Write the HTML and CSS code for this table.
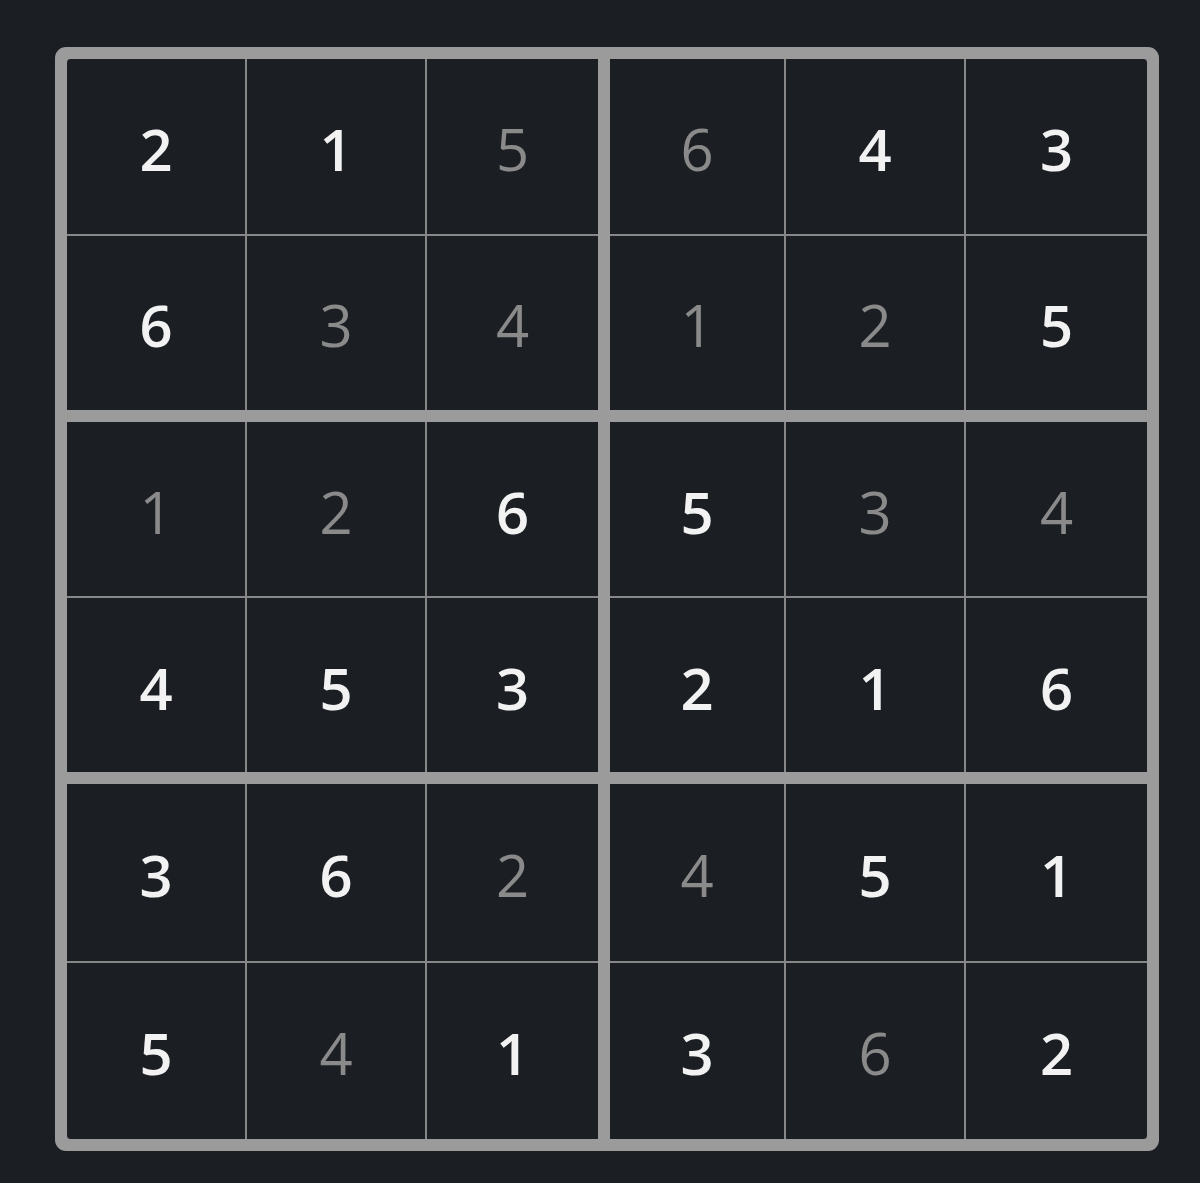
FILE: index.html
```html
<!DOCTYPE html>
<html>
<head>
<meta charset="utf-8">
<link rel="stylesheet" href="styles.css">
</head>
<body>
<div class="page">
  <div class="board">
    <div class="box left">
      <div class="cell given tl">2</div><div class="cell given">1</div><div class="cell">5</div>
      <div class="cell given">6</div><div class="cell">3</div><div class="cell">4</div>
    </div>
    <div class="box right">
      <div class="cell">6</div><div class="cell given">4</div><div class="cell given tr">3</div>
      <div class="cell">1</div><div class="cell">2</div><div class="cell given">5</div>
    </div>
    <div class="box left">
      <div class="cell">1</div><div class="cell">2</div><div class="cell given">6</div>
      <div class="cell given">4</div><div class="cell given">5</div><div class="cell given">3</div>
    </div>
    <div class="box right">
      <div class="cell given">5</div><div class="cell">3</div><div class="cell">4</div>
      <div class="cell given">2</div><div class="cell given">1</div><div class="cell given">6</div>
    </div>
    <div class="box left">
      <div class="cell given">3</div><div class="cell given">6</div><div class="cell">2</div>
      <div class="cell given bl">5</div><div class="cell">4</div><div class="cell given">1</div>
    </div>
    <div class="box right">
      <div class="cell">4</div><div class="cell given">5</div><div class="cell given">1</div>
      <div class="cell given">3</div><div class="cell">6</div><div class="cell given br">2</div>
    </div>
  </div>
</div>
</body>
</html>
```

FILE: styles.css
```css
html, body {
  margin: 0;
  padding: 0;
  background: #1b1e23;
}
.page {
  padding: 47px 0 0 55px;
}
.board {
  width: 1104px;
  height: 1104px;
  box-sizing: border-box;
  border: 12px solid #9b9b9b;
  border-radius: 11px;
  background: #9b9b9b;
  display: grid;
  grid-template-columns: 531fr 537fr;
  grid-template-rows: 351fr 350fr 355fr;
  gap: 12px;
}
.box {
  display: grid;
  grid-template-rows: 1fr 1fr;
  gap: 2px;
  background: #878787;
}
.box.left {
  grid-template-columns: 178fr 178fr 171fr;
}
.box.right {
  grid-template-columns: 174fr 178fr 181fr;
}
.cell {
  background: #1b1e23;
  display: flex;
  align-items: center;
  justify-content: center;
  font-family: "Open Sans", "Noto Sans", sans-serif;
  font-size: 58px;
  font-weight: 400;
  color: #8a8a8a;
  padding-top: 4px;
  box-sizing: border-box;
  min-width: 0;
  min-height: 0;
}
.cell.given {
  color: #f2f2f2;
  font-weight: 600;
}
.tl { border-top-left-radius: 4px; }
.tr { border-top-right-radius: 4px; }
.bl { border-bottom-left-radius: 4px; }
.br { border-bottom-right-radius: 4px; }
```
